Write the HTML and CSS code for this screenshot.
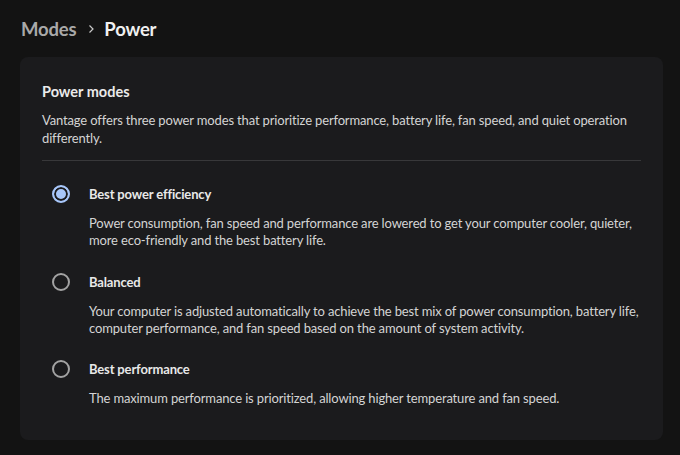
FILE: index.html
```html
<!DOCTYPE html>
<html lang="en">
<head>
<meta charset="utf-8">
<title>Power modes</title>
<link rel="stylesheet" href="styles.css">
</head>
<body>
<div class="page">
  <nav class="crumbs">
    <span class="crumb-parent">Modes</span>
    <svg class="chev" width="8" height="10" viewBox="0 0 8 10"><path d="M2.5 1.5 L6 5 L2.5 8.5" fill="none" stroke="#c8c8c8" stroke-width="1.2"/></svg>
    <span class="crumb-current">Power</span>
  </nav>
  <section class="card">
    <h2 class="card-title">Power modes</h2>
    <p class="card-desc">Vantage offers three power modes that prioritize performance, battery life, fan speed, and quiet operation differently.</p>
    <div class="divider"></div>
    <div class="options">
      <div class="option">
        <div class="opt-head"><span class="radio checked"></span><span class="opt-label">Best power efficiency</span></div>
        <p class="opt-desc">Power consumption, fan speed and performance are lowered to get your computer cooler, quieter, more eco-friendly and the best battery life.</p>
      </div>
      <div class="option">
        <div class="opt-head"><span class="radio"></span><span class="opt-label">Balanced</span></div>
        <p class="opt-desc">Your computer is adjusted automatically to achieve the best mix of power consumption, battery life, computer performance, and fan speed based on the amount of system activity.</p>
      </div>
      <div class="option">
        <div class="opt-head"><span class="radio"></span><span class="opt-label">Best performance</span></div>
        <p class="opt-desc">The maximum performance is prioritized, allowing higher temperature and fan speed.</p>
      </div>
    </div>
  </section>
</div>
</body>
</html>
```
FILE: styles.css
```css
* { box-sizing: border-box; }
html, body { margin: 0; padding: 0; }
body {
  background: #131313;
  font-family: "Lato", "Open Sans", sans-serif;
  color: #e6e6e6;
  width: 680px;
  height: 455px;
  overflow: hidden;
}
.page {
  padding: 14px 17px 0 21px;
}
.crumbs {
  display: flex;
  align-items: center;
  height: 30px;
}
.crumb-parent {
  font-size: 18.5px;
  font-weight: 700;
  color: #a9a9a9;
  letter-spacing: -0.2px;
}
.chev { margin: 0 9px 0 11px; }
.crumb-current {
  font-size: 18.5px;
  font-weight: 700;
  color: #f0f0f0;
  letter-spacing: -0.2px;
}
.card {
  margin-top: 13px;
  margin-left: -1px;
  background: #1b1b1d;
  border-radius: 8px;
  padding: 25px 22px 20px 22px;
  height: 383px;
}
.card-title {
  margin: 0;
  font-size: 14.5px;
  font-weight: 700;
  color: #eaeaea;
  line-height: 20px;
}
.card-desc {
  margin: 9px 0 0 0;
  font-size: 13px;
  letter-spacing: -0.15px;
  line-height: 18px;
  color: #d4d4d4;
}
.divider {
  height: 1px;
  background: #38383a;
  margin-top: 13px;
}
.options {
  display: flex;
  flex-direction: column;
  gap: 22.5px;
  margin-top: 23px;
}
.opt-head {
  display: flex;
  align-items: center;
  height: 20px;
}
.radio {
  width: 18px;
  height: 18px;
  border-radius: 50%;
  border: 2px solid #a3a3a3;
  margin-left: 10px;
  flex: none;
}
.radio.checked {
  border-color: #a8c7fa;
  background: #a8c7fa;
  box-shadow: inset 0 0 0 2px #1b1b1d;
}
.opt-label {
  margin-left: 19px;
  font-size: 13px;
  letter-spacing: -0.15px;
  font-weight: 700;
  color: #e8e8e8;
}
.opt-desc {
  margin: 11px 0 0 47px;
  font-size: 13px;
  letter-spacing: -0.15px;
  line-height: 17px;
  color: #d4d4d4;
}
```
